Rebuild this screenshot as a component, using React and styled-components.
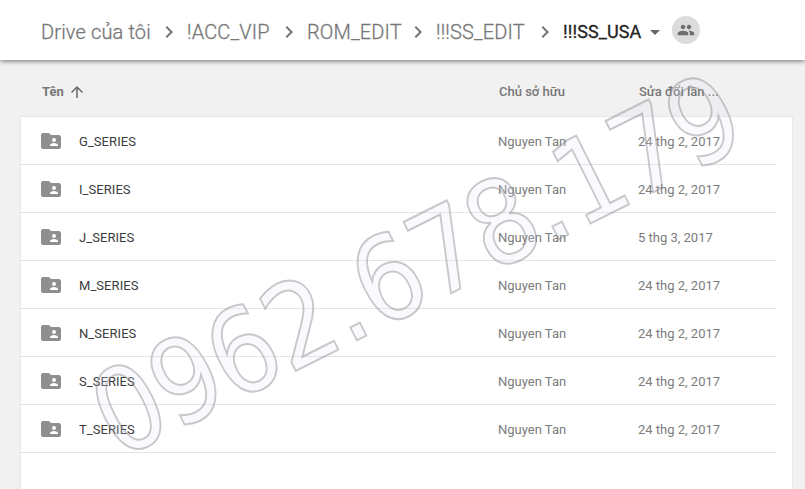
import { Fragment } from 'react';
import styled, { createGlobalStyle } from 'styled-components';
import {
    MdArrowDropDown,
    MdArrowUpward,
    MdChevronRight,
    MdFolderShared,
    MdPeople,
} from 'react-icons/md';

const parents = [
    { label: 'Drive của tôi', width: 110 },
    { label: '!ACC_VIP', width: 84 },
    { label: 'ROM_EDIT', width: 93 },
    { label: '!!!SS_EDIT', width: 91 },
];

const folders = [
    { name: 'G_SERIES', owner: 'Nguyen Tan', modified: '24 thg 2, 2017' },
    { name: 'I_SERIES', owner: 'Nguyen Tan', modified: '24 thg 2, 2017' },
    { name: 'J_SERIES', owner: 'Nguyen Tan', modified: '5 thg 3, 2017' },
    { name: 'M_SERIES', owner: 'Nguyen Tan', modified: '24 thg 2, 2017' },
    { name: 'N_SERIES', owner: 'Nguyen Tan', modified: '24 thg 2, 2017' },
    { name: 'S_SERIES', owner: 'Nguyen Tan', modified: '24 thg 2, 2017' },
    { name: 'T_SERIES', owner: 'Nguyen Tan', modified: '24 thg 2, 2017' },
];

const phone = '0962.678.179';
const squeeze = 0.885;

// dots take less room than digits
const phoneSteps = [...phone].reduce(
    (steps, char) => [...steps, steps[steps.length - 1] + (char === '.' ? 35 : 63.6) / squeeze],
    [0]
);
const phoneX = [...phone]
    .map((char, i) => phoneSteps[i] + (char === '.' ? 1.4 : 0))
    .join(' ');

const Watermark = () => (
    <Overlay viewBox="0 0 805 489">
        <text x={phoneX} transform={`translate(118.3 459.7) rotate(-26.57) scale(${squeeze} 1)`}>
            {phone}
        </text>
    </Overlay>
);

const App = () => {
    return (
        <Page>
            <GlobalStyle />
            <Header>
                {parents.map((item) => (
                    <Fragment key={item.label}>
                        <Crumb $width={item.width}>{item.label}</Crumb>
                        <Separator>
                            <MdChevronRight />
                        </Separator>
                    </Fragment>
                ))}
                <Current>!!!SS_USA</Current>
                <Caret>
                    <MdArrowDropDown />
                </Caret>
                <Shared>
                    <MdPeople />
                </Shared>
            </Header>

            <Columns>
                <Heading>
                    <b>Tên</b>
                    <MdArrowUpward />
                </Heading>
                <Heading>Chủ sở hữu</Heading>
                <Heading>Sửa đổi lần ...</Heading>
            </Columns>

            <List>
                {folders.map((folder) => (
                    <Row key={folder.name}>
                        <MdFolderShared />
                        <Name>{folder.name}</Name>
                        <Detail>{folder.owner}</Detail>
                        <Detail>{folder.modified}</Detail>
                    </Row>
                ))}
            </List>

            <Watermark />
        </Page>
    );
};

const GlobalStyle = createGlobalStyle`
    body {
        margin: 0;
        overflow: hidden;
    }

    * {
        box-sizing: border-box;
    }
`;

const Page = styled.div`
    position: relative;
    display: flex;
    flex-direction: column;
    width: 805px;
    height: 489px;
    overflow: hidden;
    background-color: #f1f1f1;
    font-family: Roboto, sans-serif;
    font-size: 13px;
    color: #777;
`;

const Header = styled.header`
    display: flex;
    flex: none;
    align-items: center;
    height: 60px;
    padding: 4px 0 0 41px;
    background-color: #fff;
    box-shadow: 0 1px 5px rgba(0, 0, 0, 0.55);
    white-space: nowrap;
`;

const Crumb = styled.a`
    width: ${(props) => props.$width}px;
    font-size: 20px;
    font-weight: 300;
    line-height: 24px;
    letter-spacing: 0.15px;
    color: #777;
    -webkit-text-stroke: 0.3px #777;
`;

const Separator = styled.span`
    display: flex;
    justify-content: center;
    width: 36px;

    svg {
        width: 24px;
        height: 24px;
        color: #757575;
    }
`;

const Current = styled.span`
    width: 79px;
    font-size: 18px;
    font-weight: 400;
    line-height: 24px;
    letter-spacing: 0.1px;
    color: #222;
    -webkit-text-stroke: 0.3px #222;
`;

const Caret = styled.span`
    display: flex;
    margin-left: 1px;

    svg {
        width: 24px;
        height: 24px;
        color: #666;
    }
`;

const Shared = styled.span`
    display: flex;
    align-items: center;
    justify-content: center;
    width: 28px;
    height: 28px;
    margin: -4px 0 0 5px;
    border-radius: 50%;
    background-color: #dcdcdc;

    svg {
        width: 18px;
        height: 18px;
        color: #6e6e6e;
    }
`;

const Columns = styled.div`
    display: grid;
    grid-template-columns: 457px 140px 140px;
    flex: none;
    align-items: center;
    height: 57px;
    padding: 6px 0 0 42px;
`;

const Heading = styled.div`
    display: flex;
    align-items: center;
    font-weight: 500;
    line-height: 16px;

    b {
        font-weight: 700;
    }

    svg {
        width: 18px;
        height: 18px;
        margin-left: 4px;
        color: #666;
    }
`;

const List = styled.div`
    flex: 1;
    width: 771px;
    margin-left: 21px;
    background-color: #fff;
    box-shadow: 0 0 1px 1px #e8e8e8;
`;

const Row = styled.div`
    display: grid;
    grid-template-columns: 40px 419px 140px 1fr;
    align-items: center;
    width: 755px;
    height: 48px;
    padding: 1px 0 0 18px;
    border-bottom: 1px solid #e5e5e5;

    svg {
        width: 24px;
        height: 24px;
        color: #8f8f8f;
    }
`;

const Name = styled.span`
    font-weight: 400;
    letter-spacing: 0.06px;
    color: #3c3c3c;
`;

const Detail = styled.span`
    color: #7c7c7c;
`;

const Overlay = styled.svg`
    position: absolute;
    top: 0;
    left: 0;
    width: 805px;
    height: 489px;
    pointer-events: none;

    text {
        font-family: 'DejaVu Sans', sans-serif;
        font-size: 116.5px;
        fill: rgba(225, 225, 250, 0.2);
        stroke: rgba(128, 128, 130, 0.42);
        stroke-width: 2px;
    }
`;

export default App;
